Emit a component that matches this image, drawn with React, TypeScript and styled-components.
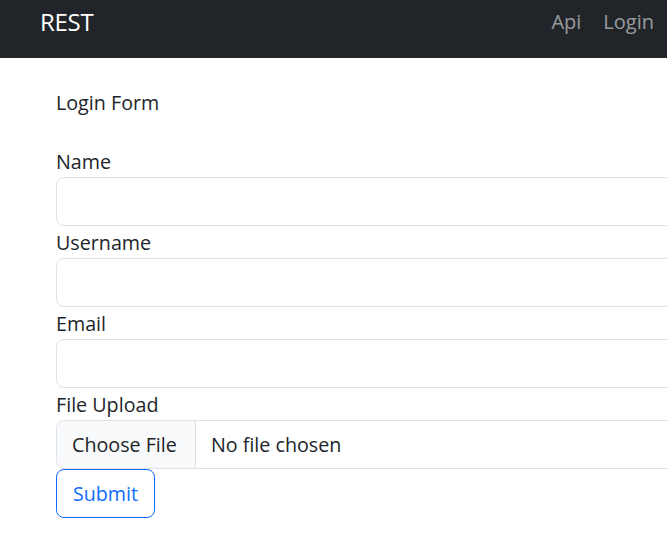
import React from "react";
import styled, { createGlobalStyle } from "styled-components";

const Global = createGlobalStyle`
  html, body {
    margin: 0;
    padding: 0;
    overflow: hidden;
    background: #ffffff;
  }
  body {
    font-family: "Open Sans", "Noto Sans", "Liberation Sans", sans-serif;
    color: #212529;
    -webkit-font-smoothing: antialiased;
  }
  * { box-sizing: border-box; }
`;

const Page = styled.div`
  width: 667px;
  min-height: 548px;
  overflow: hidden;
`;

const Navbar = styled.nav`
  height: 58px;
  background: #212529;
  display: flex;
  align-items: center;
  justify-content: space-between;
  padding: 0 2px 15px 40px;
`;

const Brand = styled.a`
  color: #ffffff;
  font-size: 24px;
  line-height: 36px;
  text-decoration: none;
  letter-spacing: -0.3px;
`;

const NavLinks = styled.div`
  display: flex;
  align-items: center;
`;

const NavLink = styled.a`
  color: rgba(255, 255, 255, 0.55);
  font-size: 20px;
  line-height: 30px;
  padding: 0 11px;
  text-decoration: none;
`;

const Main = styled.main`
  padding: 30px 0 0 56px;
`;

const Title = styled.div`
  font-size: 19.7px;
  line-height: 30px;
  margin-bottom: 27px;
`;

const Form = styled.form`
  display: flex;
  flex-direction: column;
  align-items: flex-start;
`;

const Label = styled.label`
  display: block;
  font-size: 19.7px;
  line-height: 32px;
  height: 32px;
  padding-top: 1px;
`;

const TextInput = styled.input`
  display: block;
  width: 680px;
  height: 49px;
  border: 1px solid #dee2e6;
  border-radius: 8px;
  background: #ffffff;
  padding: 0 16px;
  font: inherit;
  font-size: 19.7px;
  outline: none;
`;

const FileBox = styled.div`
  width: 680px;
  height: 49px;
  border: 1px solid #dee2e6;
  border-radius: 8px;
  display: flex;
  align-items: stretch;
  overflow: hidden;
  font-size: 19.7px;
`;

const FileButton = styled.span`
  display: flex;
  align-items: center;
  width: 139px;
  padding: 0 15px;
  background: #f8f9fa;
  border-right: 1px solid #dee2e6;
  color: #212529;
`;

const FileText = styled.span`
  display: flex;
  align-items: center;
  padding: 0 15px;
  color: #212529;
`;

const SubmitButton = styled.button`
  width: 99px;
  height: 49px;
  border: 1px solid #0d6efd;
  border-radius: 8px;
  background: #ffffff;
  color: #0d6efd;
  font: inherit;
  font-size: 19.7px;
  padding: 0;
  cursor: pointer;
`;

const fields = [
  { id: "name", label: "Name", type: "text" },
  { id: "username", label: "Username", type: "text" },
  { id: "email", label: "Email", type: "email" },
];

export default function App() {
  return (
    <Page>
      <Global />
      <Navbar>
        <Brand href="#">REST</Brand>
        <NavLinks>
          <NavLink href="#">Api</NavLink>
          <NavLink href="#">Login</NavLink>
        </NavLinks>
      </Navbar>
      <Main>
        <Title>Login Form</Title>
        <Form onSubmit={(e) => e.preventDefault()}>
          {fields.map((f) => (
            <React.Fragment key={f.id}>
              <Label htmlFor={f.id}>{f.label}</Label>
              <TextInput id={f.id} type={f.type} />
            </React.Fragment>
          ))}
          <Label>File Upload</Label>
          <FileBox>
            <FileButton>Choose File</FileButton>
            <FileText>No file chosen</FileText>
          </FileBox>
          <SubmitButton type="submit">Submit</SubmitButton>
        </Form>
      </Main>
    </Page>
  );
}
